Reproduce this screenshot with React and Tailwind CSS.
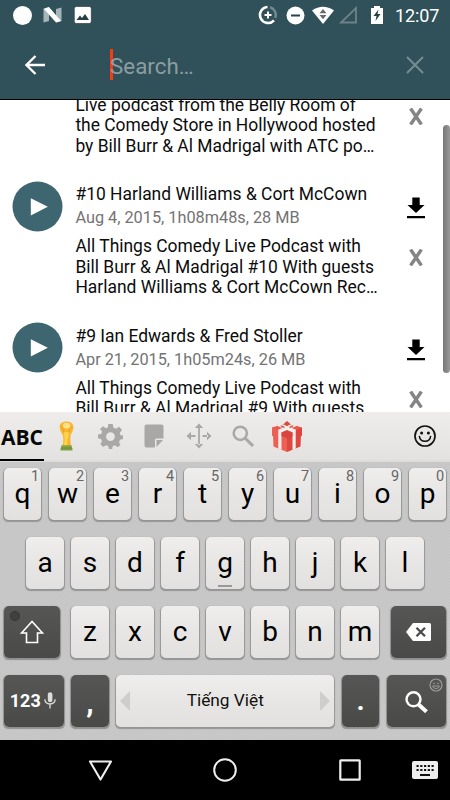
import React from "react";

function StatusBar() {
  return (
    <div className="flex h-[30px] items-center pl-[13px] pr-[10px] text-white">
      <span className="h-[19px] w-[19px] rounded-full bg-white" />
      <svg className="ml-[11px]" width="19" height="16" viewBox="0 0 19 16">
        <path d="M0.5 1.5L6 0V14L0.5 15.5Z M13 2L18.5 0.5V14L13 15.5Z" fill="#a7b5b8" />
        <path d="M6 0L18 14L13 15.5L1 2Z" fill="#fff" />
      </svg>
      <svg className="ml-[12px]" width="18" height="18" viewBox="0 0 18 18">
        <rect x="0.3" y="0.5" width="17" height="17" rx="2" fill="#fff" stroke="#162f35" strokeWidth="0.6" />
        <path d="M2.5 14L6 9.5L8 12L11 8L15 14Z" fill="#263f46" />
      </svg>
      <svg className="ml-auto" width="20" height="20" viewBox="0 0 20 20" fill="none">
        <path d="M12 2.2A8 8 0 0 1 17.2 13" stroke="#718990" strokeWidth="2.5" />
        <path d="M9.5 2A8 8 0 1 0 16 15.3" stroke="#fff" strokeWidth="2.6" />
        <path d="M10 6.5V13.5M6.5 10H13.5" stroke="#fff" strokeWidth="2" />
      </svg>
      <svg className="ml-[8px]" width="19" height="19" viewBox="0 0 19 19">
        <circle cx="9.5" cy="9.5" r="9" fill="#fff" />
        <path d="M5 9.5H14" stroke="#294149" strokeWidth="2" />
      </svg>
      <svg className="ml-[7px]" width="22" height="18" viewBox="0 0 22 18">
        <path d="M0 4.5Q11 -3 22 4.5L11 18Z" fill="#fff" />
        <path d="M7.5 7.2L11 3L14.5 7.2ZM7.5 9H14.5L11 13.2Z" fill="#636c6e" />
      </svg>
      <svg className="ml-[5px]" width="19" height="18" viewBox="0 0 19 18">
        <path d="M17 2V16.5H2Z" fill="none" stroke="#6c8388" strokeWidth="1.8" />
      </svg>
      <svg className="ml-[13px]" width="12" height="18" viewBox="0 0 12 18">
        <path d="M0 2H3V0H9V2H12V18H0Z" fill="#fff" />
        <path d="M7.5 3.5L2.5 10H5.5L4.5 15L9.5 8H6.5Z" fill="#263e45" />
      </svg>
      <span className="ml-[12px] mt-[1px] w-[45px] whitespace-nowrap text-[18px] leading-[20px] tracking-[-0.1px]">12:07</span>
    </div>
  );
}

function SearchHeader() {
  return (
    <div className="flex h-[69px] items-center pl-[25px] pr-[26px]">
      <svg width="21" height="20" viewBox="0 0 21 20" fill="none" stroke="#fff" strokeWidth="2.3">
        <path d="M20 10H2M10.5 1L1.5 10L10.5 19" />
      </svg>
      <div className="ml-[64px] flex items-center">
        <span className="h-[31px] w-[3px] bg-[#fb3b0c]" />
        <span className="-ml-[3px] pt-[2px] text-[22.3px] leading-[30px] tracking-[0.05px] text-[#8b9da1]">Search…</span>
      </div>
      <svg className="ml-auto" width="18" height="18" viewBox="0 0 18 18" fill="none" stroke="#768d93" strokeWidth="2">
        <path d="M1 1L17 17M17 1L1 17" />
      </svg>
    </div>
  );
}

function RemoveIcon() {
  return (
    <svg width="14" height="17" viewBox="0 0 14 17" fill="none" stroke="#858585" strokeWidth="3.4">
      <path d="M1.6 0.5L12.4 16.5M12.4 0.5L1.6 16.5" />
    </svg>
  );
}

const episodes = [
  {
    lines: ["Live podcast from the Belly Room of", "the Comedy Store in Hollywood hosted", "by Bill Burr & Al Madrigal with ATC po…"],
  },
  {
    title: "#10 Harland Williams & Cort McCown",
    meta: "Aug 4, 2015, 1h08m48s, 28 MB",
    lines: ["All Things Comedy Live Podcast with", "Bill Burr & Al Madrigal #10 With guests", "Harland Williams & Cort McCown Rec…"],
  },
  {
    title: "#9 Ian Edwards & Fred Stoller",
    meta: "Apr 21, 2015, 1h05m24s, 26 MB",
    lines: ["All Things Comedy Live Podcast with", "Bill Burr & Al Madrigal #9 With guests"],
  },
];

function Episode({ title, meta, lines }) {
  return (
    <div className="flex h-[141.5px] shrink-0">
      <div className="w-[75.4px] pl-[12px] pt-[5.5px]">
        {title && (
          <svg width="51" height="51" viewBox="0 0 51 51">
            <circle cx="25.5" cy="25.5" r="25" fill="#3d6670" />
            <path d="M18.8 17.2V34.5L35.8 25.8Z" fill="#fff" />
          </svg>
        )}
      </div>
      <div className="w-[310px] whitespace-nowrap text-[17.45px] text-[#0c0c0c]">
        <div className="mt-[8px] h-[23px] leading-[23px]">{title}</div>
        <div className="h-[23px] text-[16.3px] leading-[23px] text-[#737373]">{meta}</div>
        <div className="mt-[7px] leading-[20.4px]">
          {lines.map((line) => (
            <div key={line}>{line}</div>
          ))}
        </div>
      </div>
      <div className="flex w-[62px] flex-col items-center">
        <div className="mt-[22px] h-[23px]">
          {title && (
            <svg width="18" height="22" viewBox="0 0 18 22">
              <path d="M5.3 0.5H12.7V8H17.5L9 16L0.5 8H5.3Z M0 19H18V21.3H0Z" fill="#000" />
            </svg>
          )}
        </div>
        <div className="mt-[29px]">
          <RemoveIcon />
        </div>
      </div>
    </div>
  );
}

function Toolbar() {
  return (
    <div className="flex h-[50px] items-center border-b-2 border-[#dedddb] bg-gradient-to-b from-[#eeedeb] to-[#e3e2e0]">
      <div className="flex h-[50px] w-[44px] flex-col border-b-2 border-black">
        <span className="w-[44px] whitespace-nowrap pl-[1px] pt-[11px] font-['Open_Sans',sans-serif] text-[21px] font-bold leading-[30px] tracking-[0px] text-[#080808]">ABC</span>
      </div>
      <svg className="ml-[15px]" width="15" height="30" viewBox="0 0 15 30">
        <path d="M3 1.5Q7.5 -0.5 12 1.5Q15 4 14.3 8Q13.5 11 11.8 13.5Q10.8 17 12 25H3.5Q5 19 3.8 14Q0.5 10 0.6 5Q1 2.5 3 1.5Z" fill="#f7b62b" />
        <path d="M4.5 2.5Q7.5 1 10.5 2.5Q12 4 11 6.5Q7.5 8.5 4.5 6.5Q3.5 4 4.5 2.5Z" fill="#ffe08a" />
        <path d="M5 11Q8 10 10 12L8.5 19L8 25H4.8Q6.5 18 5 11Z" fill="#ffd34d" />
        <path d="M2 5.5L4.5 8.5L5 11.5M13 5.5L10.5 8.5L10 11" fill="none" stroke="#ec9c25" strokeWidth="1" />
        <path d="M2.5 24.2H12.5L13.6 29.6H1.4Z" fill="#8da23c" />
        <path d="M2 26.3H13L13.3 28.3H1.7Z" fill="#6c9a43" />
      </svg>
      <svg className="ml-[24px]" width="25" height="25" viewBox="0 0 25 25">
        <path fillRule="evenodd" d="M10.3 0H14.7L15.4 3.6L18 4.7L21.2 2.7L24 6L21.7 9.1L22.5 11.2L25 11.5V15L22 15.7L21 18.2L22.5 21L19.5 23.3L17 21.2L14.6 22.2L14.2 25H10.8L10.2 22.1L8 21.2L5.2 23L2.3 20L4.1 17.5L3 15L0 14.3V10.6L3.2 10L4.1 7.6L2 5L5 2.2L8 4.2L9.7 3.5ZM12.5 8.2A4.4 4.4 0 1 0 12.5 17A4.4 4.4 0 1 0 12.5 8.2" fill="#a9a8a7" />
      </svg>
      <svg className="ml-[21px]" width="20" height="24" viewBox="0 0 20 24">
        <path d="M2.5 0.5H17.5Q19.5 0.5 19.5 2.5V14.5H12.5Q11 14.5 11 16V23.5H2.5Q0.5 23.5 0.5 21.5V2.5Q0.5 0.5 2.5 0.5Z" fill="#a9a8a7" />
        <path d="M12.5 16H19L12.5 23Z" fill="#a9a8a7" />
      </svg>
      <svg className="ml-[22px]" width="26" height="26" viewBox="0 0 26 26" fill="#a9a8a7">
        <path d="M12.1 4H13.9V22H12.1ZM8.8 5L13 0.5L17.2 5ZM8.8 21L13 25.5L17.2 21ZM4 12H9.5V14H4ZM5 8.8V17.2L0.5 13ZM16.5 12H22V14H16.5ZM21 8.8V17.2L25.5 13Z" />
      </svg>
      <svg className="ml-[20px]" width="23" height="23" viewBox="0 0 23 23" fill="none" stroke="#a9a8a7">
        <circle cx="8.3" cy="8.3" r="6.6" strokeWidth="2.5" />
        <path d="M13 13L21 21" strokeWidth="3.1" />
      </svg>
      <svg className="ml-[17px]" width="30" height="31" viewBox="0 0 30 31">
        <path d="M1 13L15 18V31L1.5 25.5Z" fill="#ee6053" />
        <path d="M15 18L29 13L28.5 25.5L15 31Z" fill="#de473f" />
        <path d="M0 6.5L15 2L30 6.5V14.5L15 20L0 14.5Z" fill="#e9584e" />
        <path d="M0 6.5L15 13V20L0 14.5Z" fill="#ec5f53" />
        <path d="M15 13L30 6.5V14.5L15 20Z" fill="#dc463e" />
        <path d="M6 8.8L20 3L25 4.8L9.5 11.5V29L6.3 27.5V10Z" fill="#f4eeeb" />
        <path d="M24 8.8L10 3L5 4.8L20.5 11.5V29L23.7 27.5V10Z" fill="#f4eeeb" />
        <path d="M15 9.3L20.5 11.5V15L15 17L9.5 15V11.5Z" fill="#d9443d" />
        <path d="M12 2.5L15 0L18 2.5L15 5ZM8.5 4.2L11.5 5L13 7L9.5 6.2ZM21.5 4.2L18.5 5L17 7L20.5 6.2Z" fill="#dc493f" />
      </svg>
      <svg className="ml-auto mr-[14px]" width="22" height="22" viewBox="0 0 22 22" fill="none" stroke="#111">
        <circle cx="11" cy="11" r="10" strokeWidth="1.7" />
        <circle cx="7.6" cy="8" r="1.5" fill="#111" stroke="none" />
        <circle cx="14.4" cy="8" r="1.5" fill="#111" stroke="none" />
        <path d="M5.3 10.8Q6 16.3 11 16.3T16.7 10.8" strokeWidth="1.5" />
      </svg>
    </div>
  );
}

function LetterKey({ letter, hint }) {
  return (
    <div className="relative h-[52px] w-[37.5px] rounded-[5px] bg-gradient-to-b from-[#efeeec] via-[#e7e6e4] to-[#e2e1df] text-center text-[28px] leading-[52px] text-black shadow-[0_1px_1px_0.5px_rgba(0,0,0,0.25)]">
      {letter}
      {hint && <span className="absolute right-[2px] top-[1px] text-[14.5px] leading-[16px] text-[#666]">{hint}</span>}
      {letter === "g" && <span className="absolute bottom-[2.5px] left-[12px] h-[2px] w-[14px] bg-[#999]" />}
    </div>
  );
}

function Keyboard() {
  const darkKey =
    "relative flex h-[52px] shrink-0 items-center rounded-[5px] bg-gradient-to-b from-[#565655] via-[#50504f] to-[#494948] text-white shadow-[0_1px_1px_0.5px_rgba(0,0,0,0.28)]";
  return (
    <div className="h-[278px] bg-[#c6c6c6] bg-[repeating-linear-gradient(135deg,#c9c9c9_0px,#c9c9c9_1px,#c2c2c2_1.5px,#c6c6c6_2.12px)] pt-[6.25px]">
      <div className="flex gap-[7.5px] pl-[3.75px]">
        {"qwertyuiop".split("").map((c, i) => (
          <LetterKey key={c} letter={c} hint={String((i + 1) % 10)} />
        ))}
      </div>
      <div className="mt-[17px] flex gap-[7.5px] pl-[26.25px]">
        {"asdfghjkl".split("").map((c) => (
          <LetterKey key={c} letter={c} />
        ))}
      </div>
      <div className="mt-[16.75px] flex pl-[3.5px]">
        <div className={`${darkKey} w-[56px] justify-center`}>
          <span className="absolute left-[6px] top-[5px] h-[10px] w-[10px] rounded-full border border-[#343434] bg-[#414141]" />
          <svg width="24" height="24" viewBox="0 0 24 24" fill="none" stroke="#fff" strokeWidth="1.6">
            <path d="M12 1.5L1.5 13H6.5V22.5H17.5V13H22.5Z" />
          </svg>
        </div>
        <div className="ml-[11.75px] flex gap-[7.5px]">
          {"zxcvbnm".split("").map((c) => (
            <LetterKey key={c} letter={c} />
          ))}
        </div>
        <div className={`${darkKey} ml-[12.25px] w-[55px] justify-center`}>
          <svg width="25" height="18" viewBox="0 0 25 18">
            <path d="M7 0H23.5Q25 0 25 1.5V16.5Q25 18 23.5 18H7L0 9Z" fill="#fff" />
            <path d="M10.5 4.7L19 13.3M19 4.7L10.5 13.3" stroke="#4b4b4b" strokeWidth="2.3" />
          </svg>
        </div>
      </div>
      <div className="mt-[16.75px] flex gap-[7.5px] pl-[3.75px]">
        <div className={`${darkKey} w-[60px] pl-[6px]`}>
          <span className="w-[31px] text-[18px] font-bold">123</span>
          <svg className="ml-[3px]" width="12" height="17" viewBox="0 0 12 17">
            <rect x="3.8" y="0.3" width="4.6" height="10" rx="2.3" fill="#ddd" />
            <path d="M0.8 7.3Q1.2 12 6 12T11.2 7.3M6 12V16.5" fill="none" stroke="#ddd" strokeWidth="1.3" />
          </svg>
        </div>
        <div className={`${darkKey} w-[37.5px] justify-center pt-[4px] text-[30px] font-bold`}>,</div>
        <div className="flex h-[52px] w-[218px] items-center justify-between rounded-[5px] bg-gradient-to-b from-[#efeeec] via-[#e7e6e4] to-[#e2e1df] px-[4px] text-[17.3px] text-[#111] shadow-[0_1px_1px_0.5px_rgba(0,0,0,0.25)]">
          <svg width="10" height="20" viewBox="0 0 10 20"><path d="M10 0V20L0 10Z" fill="#cecdcb" /></svg>
          <span>Tiếng Việt</span>
          <svg width="10" height="20" viewBox="0 0 10 20"><path d="M0 0V20L10 10Z" fill="#cecdcb" /></svg>
        </div>
        <div className={`${darkKey} w-[37.5px] justify-center text-[28px] font-bold`}>.</div>
        <div className={`${darkKey} w-[59.5px] justify-center pt-[3px]`}>
          <svg width="23" height="22" viewBox="0 0 23 22" fill="none" stroke="#fff">
            <circle cx="8.5" cy="8.3" r="7" strokeWidth="2.4" />
            <path d="M13 13L21.5 20.7" strokeWidth="4" />
          </svg>
          <svg className="absolute right-[3px] top-[3px]" width="14" height="14" viewBox="0 0 14 14" fill="none" stroke="#9b9b9a">
            <circle cx="7" cy="7" r="6" strokeWidth="1.2" />
            <path d="M4.3 5.5H5.7M8.3 5.5H9.7" strokeWidth="1.6" />
            <path d="M3.5 8H10.5Q10 10.5 7 10.5T3.5 8Z" strokeWidth="1" />
          </svg>
        </div>
      </div>
    </div>
  );
}

function NavBar() {
  return (
    <div className="flex h-[60px] items-center bg-black pl-[87.5px] pr-[12px]">
      <svg width="25" height="21" viewBox="0 0 25 21" fill="none" stroke="#eee" strokeWidth="2.1" strokeLinejoin="round">
        <path d="M2 1.5H23L12.5 19.5Z" />
      </svg>
      <svg className="ml-[100.5px]" width="24" height="24" viewBox="0 0 24 24" fill="none" stroke="#eee" strokeWidth="2">
        <circle cx="12" cy="12" r="10.8" />
      </svg>
      <svg className="ml-[102px]" width="22" height="22" viewBox="0 0 22 22" fill="none" stroke="#eee" strokeWidth="2.2">
        <rect x="1.3" y="1.3" width="19.4" height="19.4" rx="0.5" />
      </svg>
      <svg className="ml-auto" width="26" height="18" viewBox="0 0 26 18">
        <rect width="26" height="18" rx="2" fill="#eee" />
        <path d="M4.5 5H21.7M4.5 9H21.7" stroke="#111" strokeWidth="2.2" strokeDasharray="2.2 1.55" />
        <path d="M8 14H18" stroke="#111" strokeWidth="2" />
      </svg>
    </div>
  );
}

export default function App() {
  return (
    <div className="flex h-[800px] w-[450px] flex-col overflow-hidden bg-white font-[Roboto,sans-serif]">
      <div className="h-[100px] shrink-0 border-b border-black bg-[#305159]">
        <StatusBar />
        <SearchHeader />
      </div>
      <div className="relative h-[312px] shrink-0 overflow-hidden bg-white">
        <div className="-mt-[66.3px] flex flex-col">
          {episodes.map((e) => (
            <Episode key={e.lines[1]} {...e} />
          ))}
        </div>
        <div className="absolute right-0 top-[25px] h-[248px] w-[7.5px] rounded-[4px] bg-gradient-to-r from-[#777] to-[#999]" />
      </div>
      <Toolbar />
      <Keyboard />
      <NavBar />
    </div>
  );
}
